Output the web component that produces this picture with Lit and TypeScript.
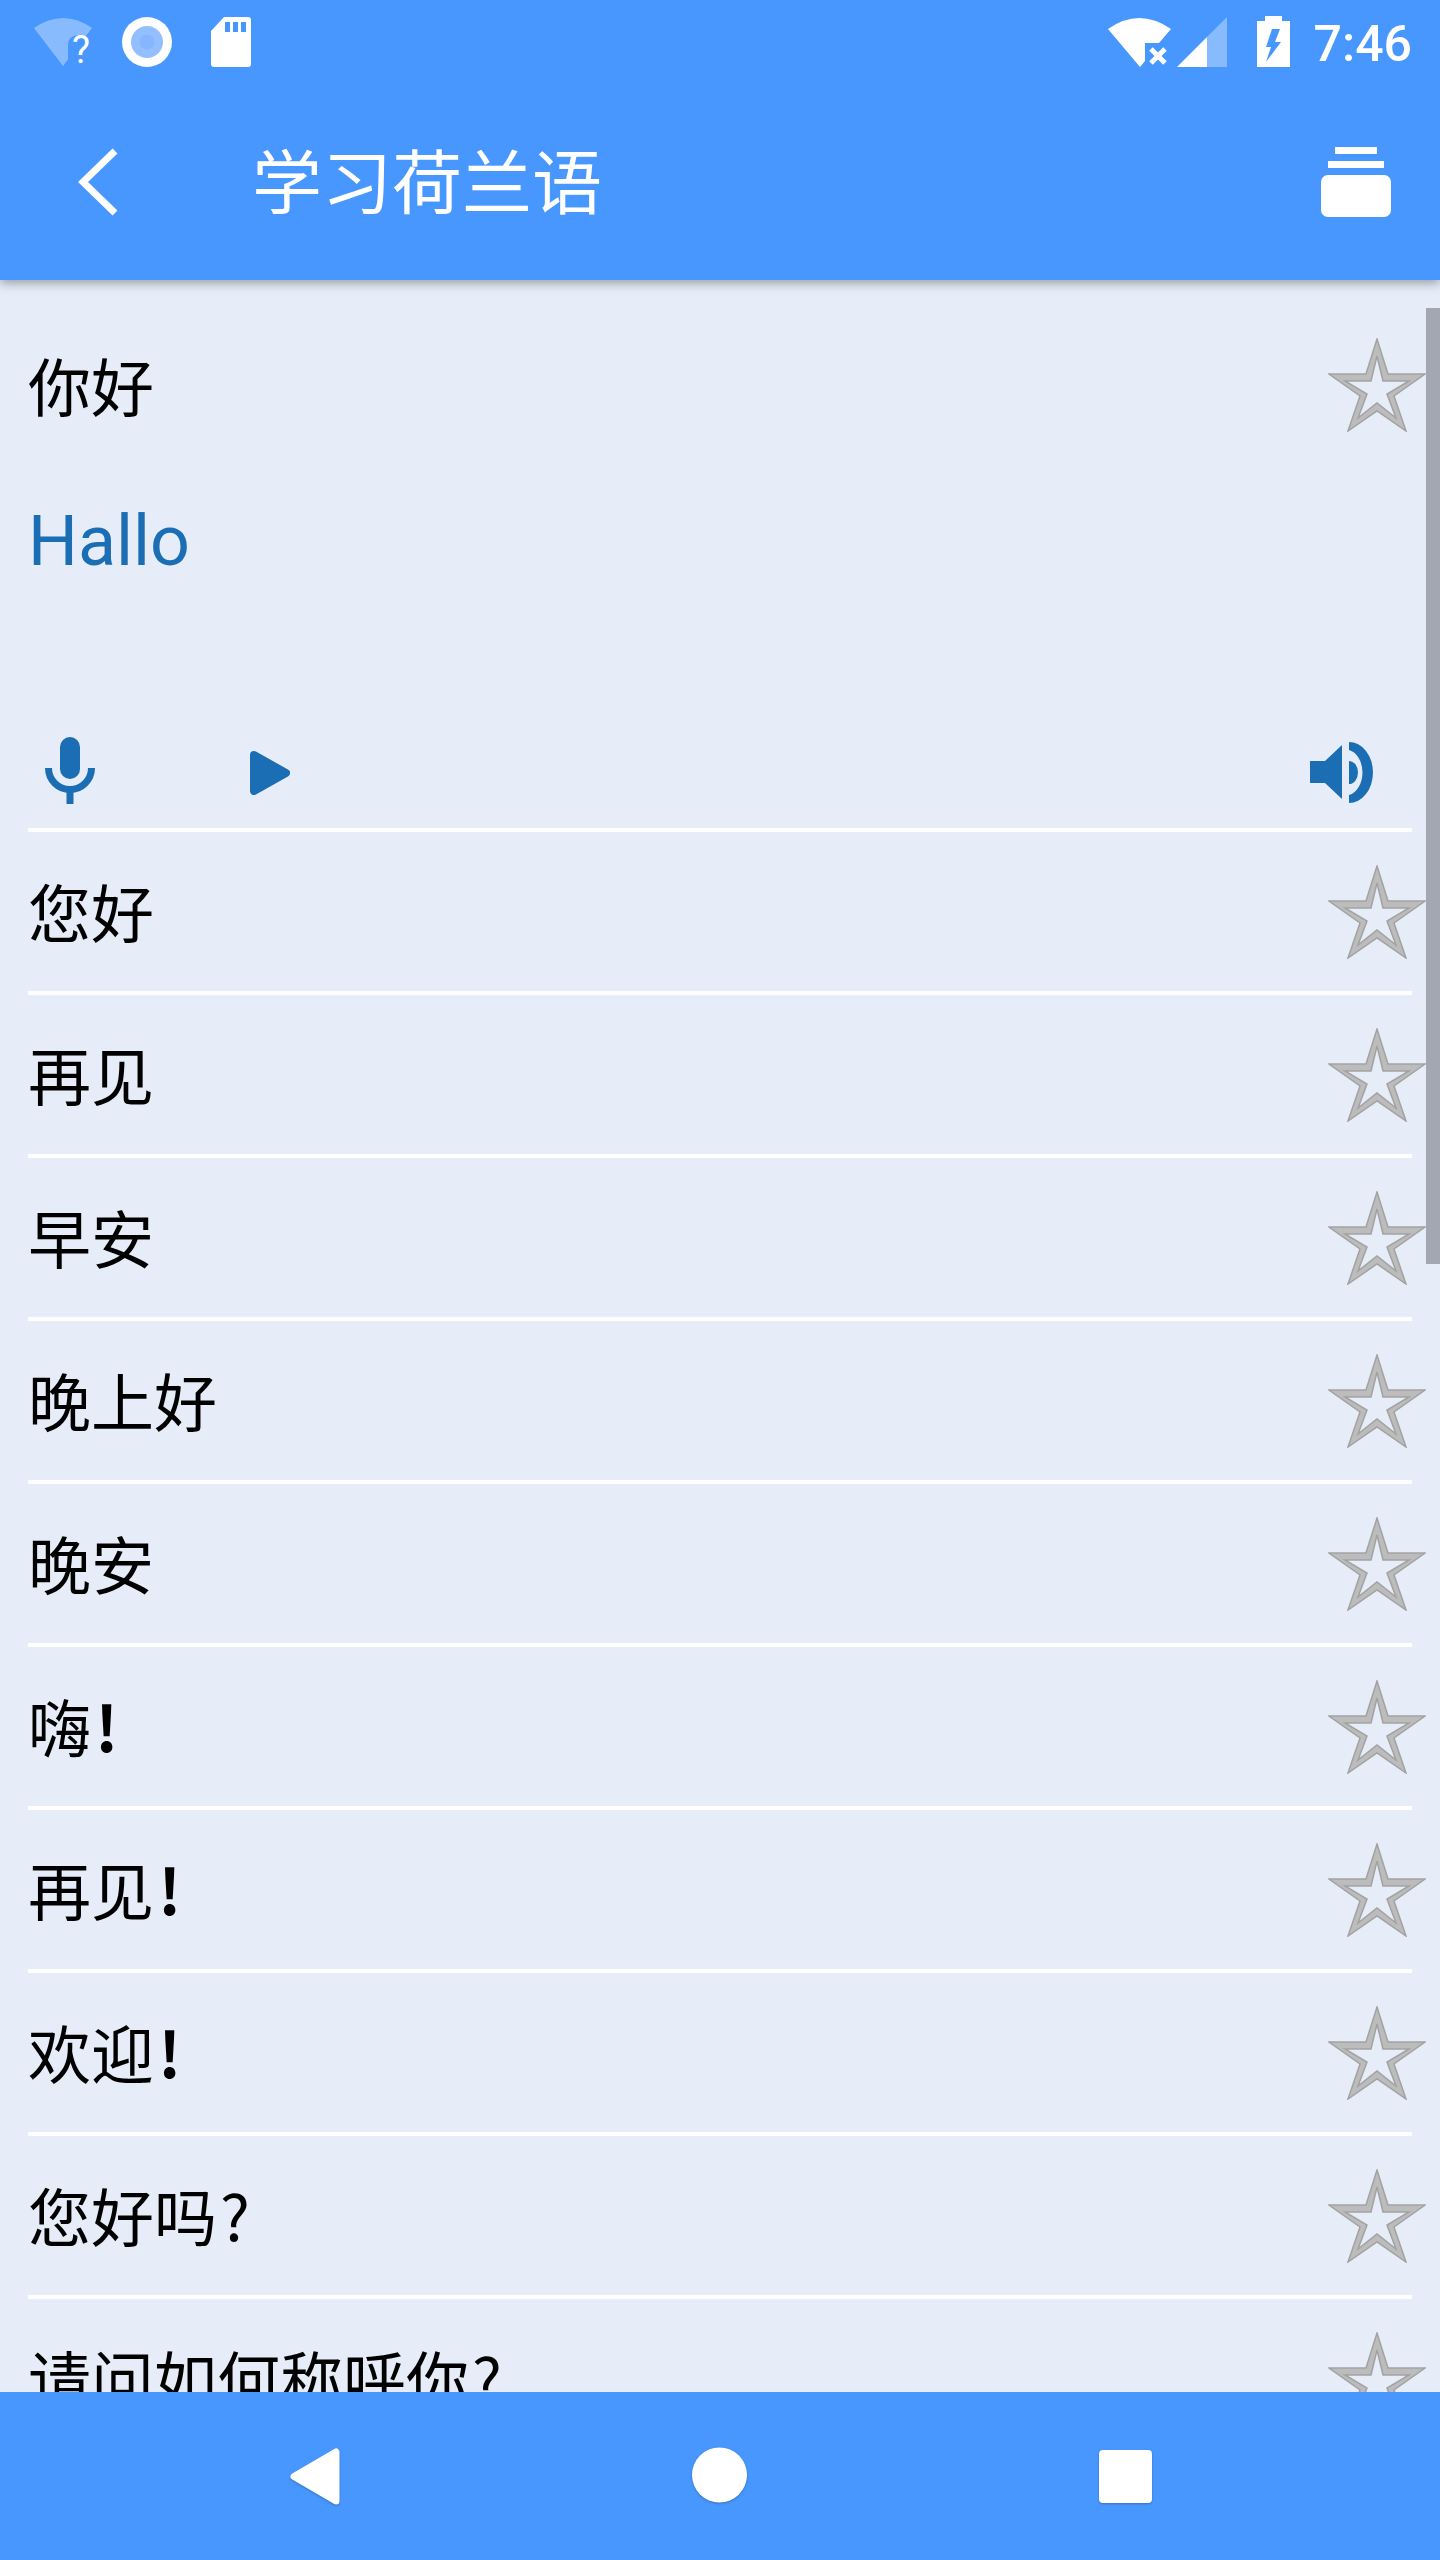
import { LitElement, html, css } from "lit";
import { customElement } from "lit/decorators.js";

const PHRASES = ["您好", "再见", "早安", "晚上好", "晚安", "嗨!", "再见!", "欢迎!", "您好吗?", "请问如何称呼你?"];

const star = () => html`<svg class="star" width="98" height="94" viewBox="0 0 98 94">
  <path
    fill="#bcbcbc"
    stroke="#a2a2a2"
    stroke-width="1.5"
    fill-rule="evenodd"
    d="M49 1 L60 36 L97 36 L66 58 L78 93 L49 73 L20 93 L32 58 L1 36 L38 36 Z
       M49 18 L43 43 L17 43 L39 56 L30 80 L49 65 L68 80 L59 56 L81 43 L55 43 Z"
  />
</svg>`;

// the trailing ! and ? sit further out and look heavier than the font's own
const phrase = (p: string) => {
  const last = p[p.length - 1];
  if (last === "!") return html`${p.slice(0, -1)}<b class="bang">!</b>`;
  if (last === "?") return html`${p.slice(0, -1)}<i class="ask">?</i>`;
  return p;
};

@customElement("app-root")
export class AppRoot extends LitElement {
  static styles = css`
    :host {
      display: block;
      font-family: Roboto, "Noto Sans CJK SC", sans-serif;
    }
    .page {
      display: flex;
      flex-direction: column;
      height: 2560px;
      background: #e6edf8;
      overflow: hidden;
    }
    .head {
      position: relative;
      z-index: 2;
      flex: none;
      background: #4897fe;
      color: #fff;
      box-shadow: 0 3px 10px rgba(0, 0, 0, 0.35);
    }
    .status {
      display: flex;
      align-items: flex-start;
      height: 68px;
      padding: 16px 28px 0 34px;
    }
    .status svg {
      flex: none;
      display: block;
    }
    .status .dot {
      margin-left: 30px;
    }
    .status .sd {
      margin-left: 39px;
    }
    .status .net {
      margin-left: auto;
    }
    .status .cell {
      margin-left: 6px;
    }
    .status .bat {
      margin-left: 30px;
    }
    .time {
      margin-left: 24px;
      font-size: 50px;
      font-weight: 500;
      line-height: 56px;
    }
    .bar {
      display: flex;
      align-items: center;
      height: 196px;
      padding: 0 49px 0 78px;
    }
    .title {
      flex: 1;
      margin-left: 134px;
      padding-bottom: 6px;
      font-family: "Noto Sans CJK SC", sans-serif;
      font-size: 70px;
      line-height: 96px;
    }
    .body {
      position: relative;
      flex: 1;
      min-height: 0;
      overflow: hidden;
    }
    .scroll {
      position: absolute;
      top: 28px;
      right: 0;
      width: 14px;
      height: 956px;
      background: #a2a7b2;
    }
    .row {
      display: flex;
      align-items: center;
      justify-content: space-between;
      height: 159px;
      padding: 0 14px 0 28px;
      color: #000;
      font-family: "Noto Sans CJK SC", sans-serif;
      font-size: 63px;
      line-height: 90px;
    }
    .row span {
      padding-bottom: 3px;
    }
    .row.first {
      height: 210px;
    }
    .bang {
      margin-left: 4px;
      font-weight: 700;
    }
    .ask {
      margin-left: 3px;
      font-style: normal;
    }
    .star {
      flex: none;
      display: block;
    }
    .hallo {
      margin-left: 28px;
      padding-top: 3px;
      color: #1c6eb4;
      font-size: 70px;
      line-height: 96px;
    }
    .actions {
      display: flex;
      align-items: flex-start;
      height: 90px;
      margin-top: 136px;
      padding: 12px 67px 0 45px;
      margin-bottom: 1px;
    }
    .actions svg {
      flex: none;
      display: block;
      fill: #1c6eb4;
    }
    .actions .play {
      margin: 14px 0 0 155px;
    }
    .actions .sound {
      margin: 5px 0 0 auto;
    }
    .line {
      height: 4px;
      margin: 0 28px;
      background: #fff;
    }
    .nav {
      position: relative;
      z-index: 2;
      flex: none;
      display: flex;
      height: 168px;
      background: #4897fe;
    }
    .nav svg {
      position: absolute;
      display: block;
      fill: #fff;
      filter: drop-shadow(0 1px 1px rgba(0, 0, 0, 0.25));
    }
    .nav .back {
      left: 290px;
      top: 56px;
    }
    .nav .home {
      left: 692px;
      top: 55px;
    }
    .nav .recent {
      left: 1099px;
      top: 58px;
    }
  `;

  render() {
    return html`<div class="page">
      <div class="head">
        <div class="status">
          <svg width="58" height="60" viewBox="0 0 58 60">
            <path fill="#fff" fill-opacity="0.35" d="M0 12 Q29 -8 58 12 L29 50 Z" />
            <path fill="#4897fe" d="M34 30 a9 9 0 0 1 18 -3 v24 h-18 Z" />
            <text x="38" y="47" fill="#fff" font-family="Roboto" font-size="38">?</text>
          </svg>
          <svg class="dot" width="50" height="52" viewBox="0 0 50 52">
            <circle cx="25" cy="26" r="25" fill="#fff" />
            <circle cx="25" cy="26" r="16" fill="#94bfff" />
            <circle cx="25" cy="26" r="7.5" fill="#85b6ff" />
          </svg>
          <svg class="sd" width="40" height="52" viewBox="0 0 40 52">
            <path fill="#fff" d="M13 1 H37 a3 3 0 0 1 3 3 V48 a3 3 0 0 1 -3 3 H3 a3 3 0 0 1 -3 -3 V15 Z" />
            <path fill="#4897fe" d="M14 6 h5 v10 h-5 Z M22 6 h5 v10 h-5 Z M30 6 h5 v10 h-5 Z" />
          </svg>
          <svg class="net" width="63" height="52" viewBox="0 0 63 52">
            <path fill="#fff" d="M0 13 Q31 -9 63 13 L51 27 L37 27 L37 45 L32 51 Z" />
            <path stroke="#fff" stroke-width="5" d="M43 33 L57 47 M57 33 L43 47" />
          </svg>
          <svg class="cell" width="50" height="52" viewBox="0 0 50 52">
            <path fill="#fff" fill-opacity="0.35" d="M30 21 L50 1 V51 H30 Z" />
            <path fill="#fff" d="M0 51 L30 21 V51 Z" />
          </svg>
          <svg class="bat" width="33" height="52" viewBox="0 0 33 52">
            <path
              fill="#fff"
              fill-rule="evenodd"
              d="M8 0 H25 V5 H33 V51 H0 V5 H8 Z M15 13 L9 31 L14 31 L9 46 L24 26 L18 26 L23 13 Z"
            />
          </svg>
          <span class="time">7:46</span>
        </div>
        <div class="bar">
          <svg width="40" height="68" viewBox="0 0 40 68">
            <path fill="none" stroke="#fff" stroke-width="7" d="M37 3 L5 34 L37 65" />
          </svg>
          <span class="title">学习荷兰语</span>
          <svg width="70" height="70" viewBox="0 0 70 70">
            <path fill="#fff" d="M14 0 H56 V7 H14 Z M7 14 H63 V21 H7 Z" />
            <rect fill="#fff" y="28" width="70" height="42" rx="7" />
          </svg>
        </div>
      </div>

      <div class="body">
        <div class="row first"><span>你好</span>${star()}</div>
        <div class="hallo">Hallo</div>
        <div class="actions">
          <svg width="50" height="67" viewBox="0 0 50 67">
            <rect x="15" width="20" height="42" rx="10" />
            <path fill="none" stroke="#1c6eb4" stroke-width="7" d="M3.5 31 A21.5 21.5 0 0 0 46.5 31" />
            <rect x="21.5" y="52" width="7" height="15" />
          </svg>
          <svg class="play" width="40" height="44" viewBox="0 0 40 44">
            <path stroke="#1c6eb4" stroke-width="8" stroke-linejoin="round" d="M4 4 L36 22 L4 40 Z" />
          </svg>
          <svg class="sound" width="63" height="61" viewBox="0 0 63 61">
            <path d="M0 19 H15 L32 3 V57 L15 41 H0 Z" />
            <path d="M39 19 A9 11.5 0 0 1 39 42 Z" />
            <path d="M39 0 A24 30.5 0 0 1 39 61 V53 A17 23 0 0 0 39 8 Z" />
          </svg>
        </div>
        <div class="line"></div>
        ${PHRASES.map(
          (p) => html`<div class="row"><span>${phrase(p)}</span>${star()}</div>
            <div class="line"></div>`
        )}
        <div class="scroll"></div>
      </div>

      <div class="nav">
        <svg class="back" width="50" height="57" viewBox="0 0 50 57">
          <path stroke="#fff" stroke-width="7" stroke-linejoin="round" d="M46 4 V53 L4 28.5 Z" />
        </svg>
        <svg class="home" width="55" height="56" viewBox="0 0 55 56">
          <circle cx="27.5" cy="28" r="27.5" />
        </svg>
        <svg class="recent" width="53" height="53" viewBox="0 0 53 53">
          <rect width="53" height="53" rx="4" />
        </svg>
      </div>
    </div>`;
  }
}
